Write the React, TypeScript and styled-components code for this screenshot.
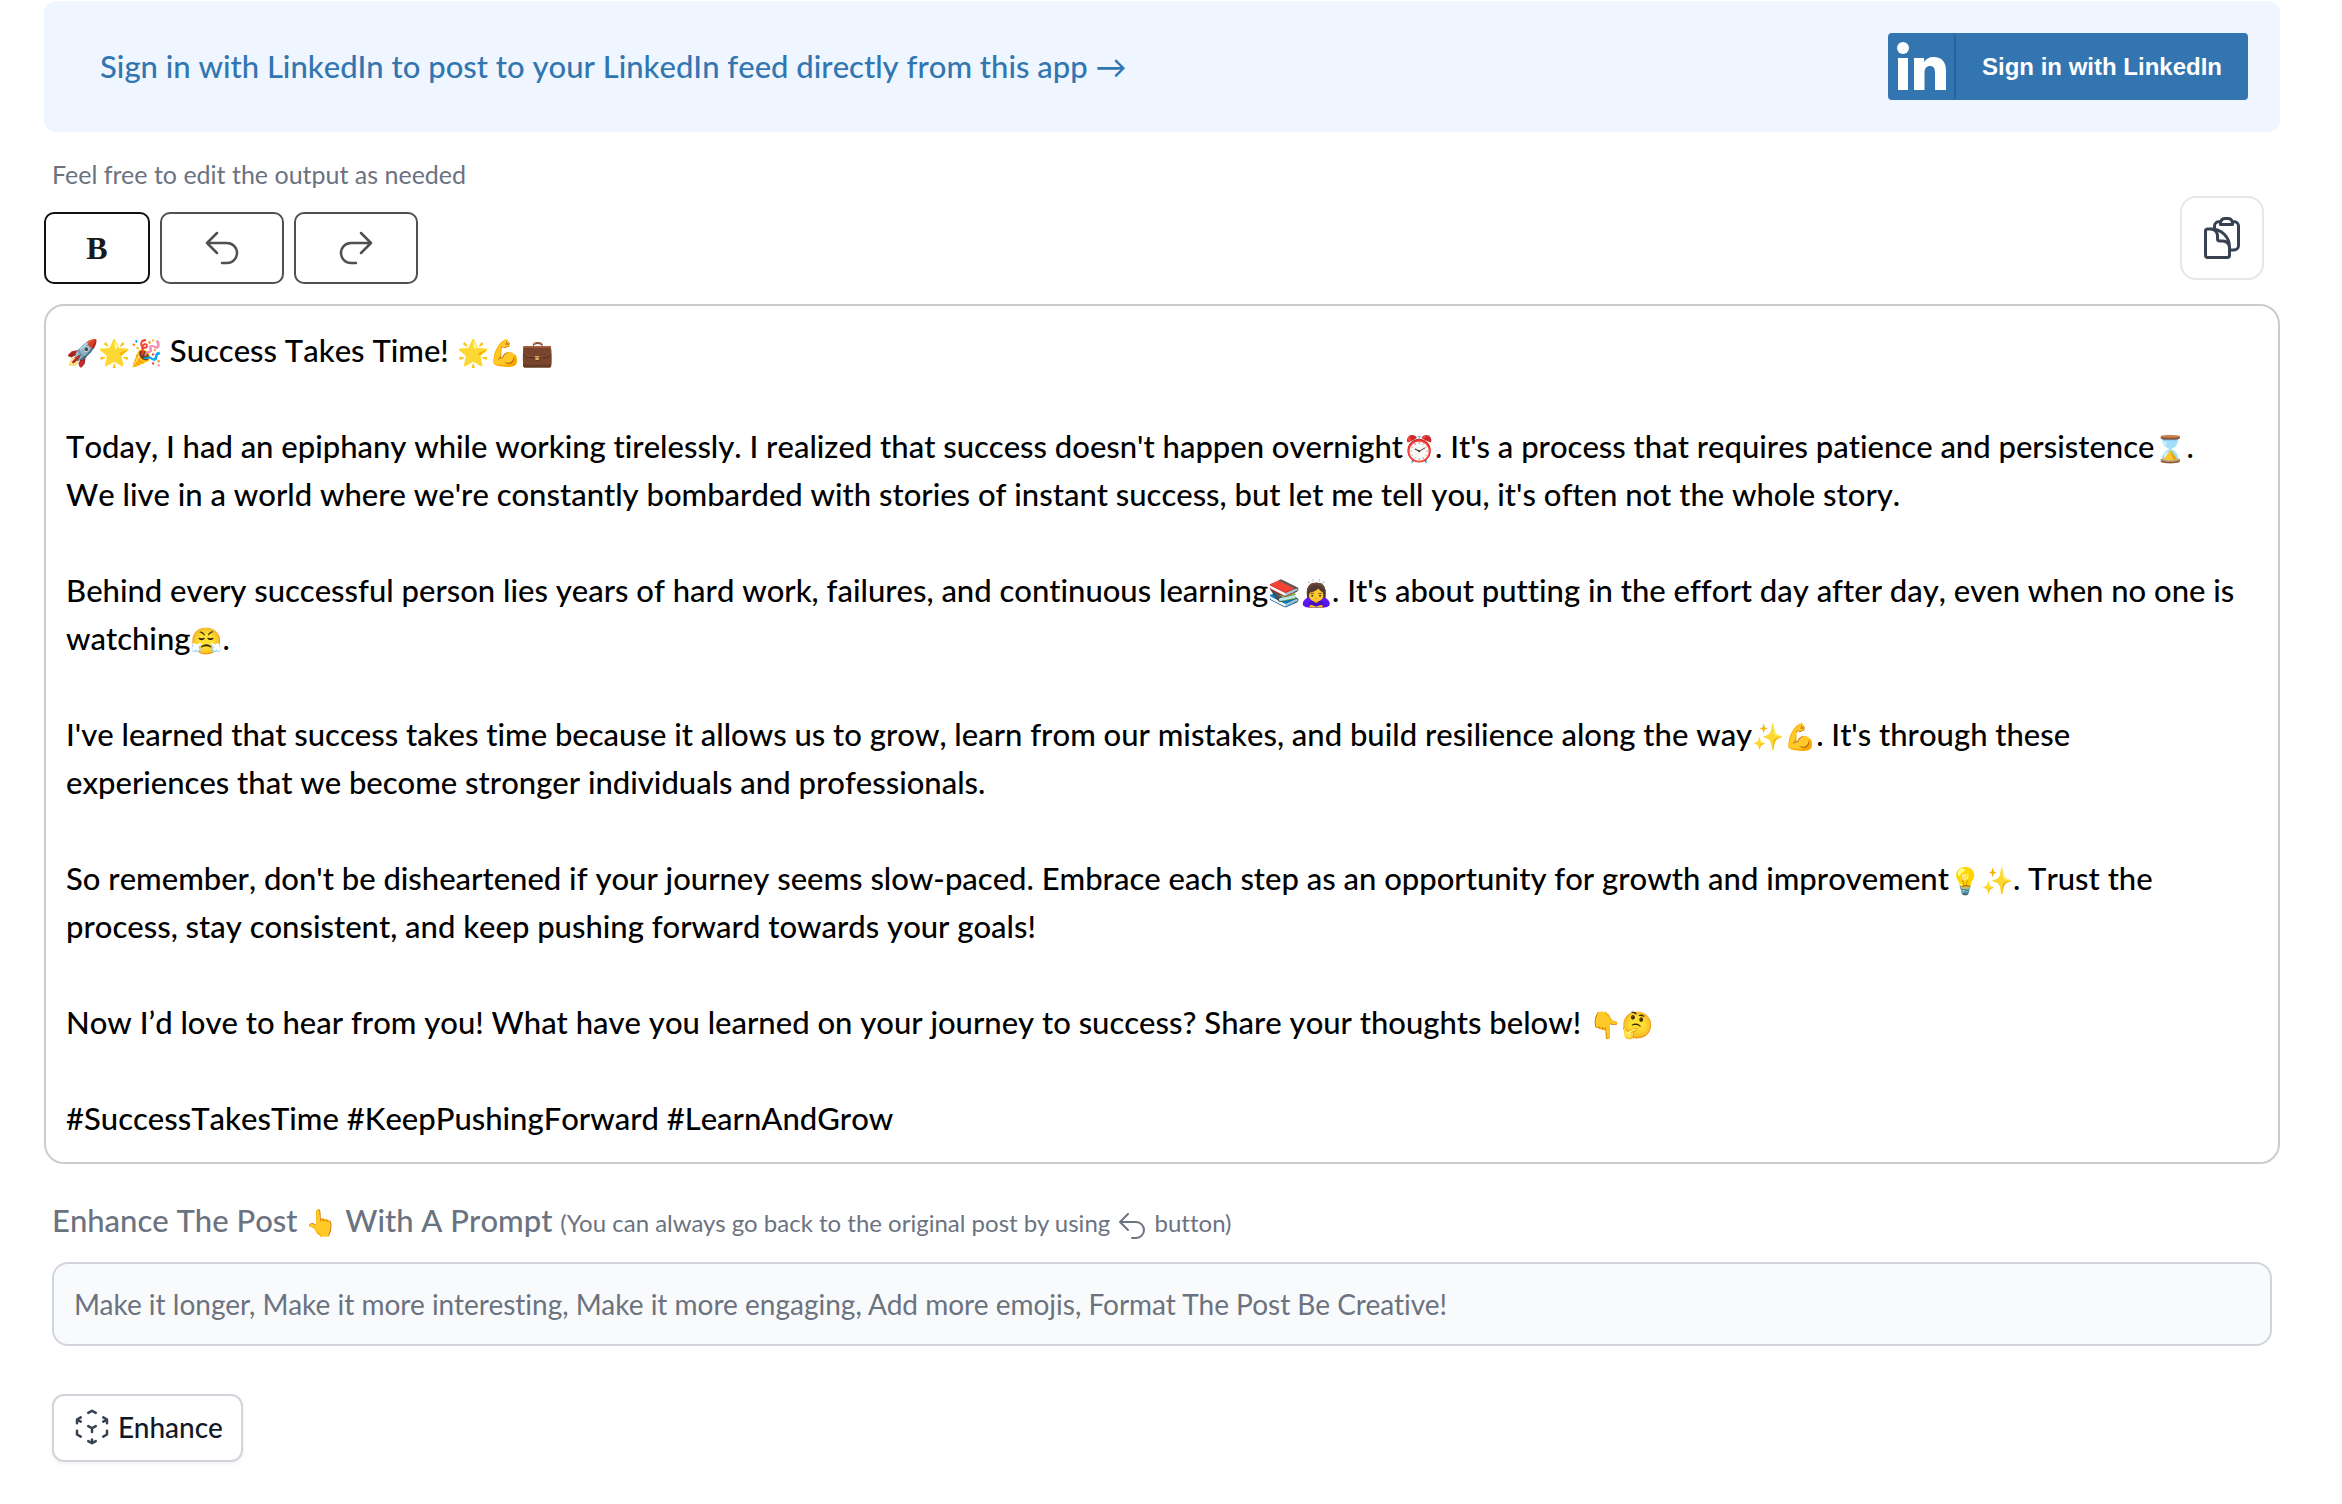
import React from "react";
import styled, { createGlobalStyle, css } from "styled-components";
import {
  HiOutlineArrowUturnLeft,
  HiOutlineArrowUturnRight,
  HiOutlineClipboardDocument,
  HiOutlineCubeTransparent,
} from "react-icons/hi2";

const GlobalStyle = createGlobalStyle`
  *, *::before, *::after { box-sizing: border-box; }
  body {
    margin: 0;
    background: #fff;
    color: #000;
    font-family: Lato, "Liberation Sans", sans-serif;
    font-variant-ligatures: none;
  }
  button, input { font-family: inherit; font-variant-ligatures: none; }
`;

const largeText = css`
  font-size: 31px;
  font-weight: 500;
  font-kerning: none;
  line-height: 48px;
`;

const Page = styled.main`
  padding: 1px 62px 40px 44px;
`;

const Banner = styled.section`
  display: flex;
  align-items: center;
  justify-content: space-between;
  padding: 32px 32px 32px 56px;
  border-radius: 12px;
  background: #eff6ff;
`;

const BannerText = styled.p`
  ${largeText}
  margin: 0;
  padding-bottom: 2px;
  color: #3276b1;
`;

const LinkedInButton = styled.button`
  display: flex;
  align-items: stretch;
  width: 360px;
  height: 67px;
  padding: 0;
  border: 0;
  border-radius: 4px;
  background: #3375b1;
  color: #fff;
  font: bold 24px/32px "Liberation Sans", Arial, sans-serif;
  cursor: pointer;
`;

const LogoCell = styled.span`
  width: 68px;
  border-right: 2px solid #2a639a;
  border-radius: 4px;
`;

const LinkedInLabel = styled.span`
  flex: 1;
  align-self: center;
`;

const Hint = styled.p`
  margin: 25px 8px 21px;
  font-size: 25px;
  line-height: 34px;
  color: #6b7280;
`;

const Toolbar = styled.div`
  display: flex;
  align-items: center;
  gap: 10px;
`;

const ToolButton = styled.button<{ $strong?: boolean }>`
  display: flex;
  align-items: center;
  justify-content: center;
  min-width: 106px;
  height: 72px;
  padding: 0 40px;
  border: 2px solid ${(p) => (p.$strong ? "#111" : "#505050")};
  border-radius: 10px;
  background: #fff;
  color: ${(p) => (p.$strong ? "#1a1a1a" : "#505050")};
  font: bold 32px/40px "Liberation Serif", serif;
  cursor: pointer;
`;

const CopyButton = styled.button`
  display: flex;
  margin: -20px 16px 0 auto;
  padding: 16px;
  border: 2px solid #e5e7eb;
  border-radius: 16px;
  background: #fff;
  color: #374151;
  cursor: pointer;
`;

const Editor = styled.div`
  ${largeText}
  margin-top: 20px;
  padding: 20px;
  border: 2px solid #ccc;
  border-radius: 20px;
  white-space: pre-wrap;
`;

const Emoji = styled.span`
  font-size: 26px;
  line-height: 1;
`;

const PromptLabel = styled.label`
  ${largeText}
  display: block;
  margin: 32px 8px 18px;
  color: #6b7280;
`;

const Note = styled.span`
  font-size: 24px;
  font-weight: 400;
  font-kerning: auto;
  line-height: 1;

  svg { vertical-align: middle; }
`;

const PromptForm = styled.form`
  padding: 0 8px;
`;

const PromptInput = styled.input`
  display: block;
  width: 100%;
  height: 84px;
  padding: 0 20px;
  border: 2px solid #d1d5db;
  border-radius: 16px;
  background: #f9fafb;
  font-size: 28px;
  color: #111827;

  &::placeholder { color: #6b7280; opacity: 1; }
`;

const EnhanceButton = styled.button`
  display: flex;
  align-items: center;
  gap: 6px;
  height: 68px;
  margin-top: 48px;
  padding: 0 18px 2px;
  border: 2px solid #d1d5db;
  border-radius: 12px;
  background: #fff;
  box-shadow: 0 2px 4px rgba(0, 0, 0, 0.06);
  color: #111827;
  font-size: 28px;
  font-weight: 500;
  cursor: pointer;

  svg { color: #374151; }
`;

export default function App() {
  return (
    <Page>
      <GlobalStyle />
      <Banner>
        <BannerText>Sign in with LinkedIn to post to your LinkedIn feed directly from this app →</BannerText>
        <LinkedInButton type="button">
          <LogoCell>
            <svg width="66" height="67" viewBox="0 0 66 67" fill="#fff" aria-hidden="true">
              <circle cx="15" cy="15" r="6" />
              <path d="M10 25h10v32H10zM26 25h10v4c2-3 5-5 9.500-5C54 24 58 29 58 38v19H47V40c0-5-1.500-7-5-7s-5.500 2.500-5.500 7v17H26z" />
            </svg>
          </LogoCell>
          <LinkedInLabel>Sign in with LinkedIn</LinkedInLabel>
        </LinkedInButton>
      </Banner>

      <Hint>Feel free to edit the output as needed</Hint>
      <Toolbar>
        <ToolButton type="button" $strong aria-label="Bold">B</ToolButton>
        <ToolButton type="button" aria-label="Undo"><HiOutlineArrowUturnLeft size={40} /></ToolButton>
        <ToolButton type="button" aria-label="Redo"><HiOutlineArrowUturnRight size={40} /></ToolButton>
        <CopyButton type="button" aria-label="Copy"><HiOutlineClipboardDocument size={48} /></CopyButton>
      </Toolbar>

      <Editor role="textbox" aria-multiline="true" aria-label="Post" contentEditable suppressContentEditableWarning spellCheck={false}>
        <Emoji>🚀🌟🎉</Emoji> Success Takes Time! <Emoji>🌟💪💼</Emoji>{"\n\n"}
        Today, I had an epiphany while working tirelessly. I realized that success doesn't happen overnight<Emoji>⏰</Emoji>. It's a process that requires patience and persistence<Emoji>⌛</Emoji>.{"\n"}
        We live in a world where we're constantly bombarded with stories of instant success, but let me tell you, it's often not the whole story.{"\n\n"}
        Behind every successful person lies years of hard work, failures, and continuous learning<Emoji>📚🙇‍♀️</Emoji>. It's about putting in the effort day after day, even when no one is watching<Emoji>😤</Emoji>.{"\n\n"}
        I've learned that success takes time because it allows us to grow, learn from our mistakes, and build resilience along the way<Emoji>✨💪</Emoji>. It's through these{"\n"}
        experiences that we become stronger individuals and professionals.{"\n\n"}
        So remember, don't be disheartened if your journey seems slow-paced. Embrace each step as an opportunity for growth and improvement<Emoji>💡✨</Emoji>. Trust the process, stay consistent, and keep pushing forward towards your goals!{"\n\n"}
        Now I’d love to hear from you! What have you learned on your journey to success? Share your thoughts below! <Emoji>👇🤔</Emoji>{"\n\n"}
        #SuccessTakesTime #KeepPushingForward #LearnAndGrow
      </Editor>

      <PromptLabel htmlFor="prompt">
        Enhance The Post <Emoji>👆</Emoji> With A Prompt{" "}
        <Note>(You can always go back to the original post by using <HiOutlineArrowUturnLeft size={32} /> button)</Note>
      </PromptLabel>
      <PromptForm onSubmit={(e) => e.preventDefault()}>
        <PromptInput
          id="prompt"
          type="text"
          placeholder="Make it longer, Make it more interesting, Make it more engaging, Add more emojis, Format The Post Be Creative!"
        />
        <EnhanceButton type="submit">
          <HiOutlineCubeTransparent size={40} />
          Enhance
        </EnhanceButton>
      </PromptForm>
    </Page>
  );
}
